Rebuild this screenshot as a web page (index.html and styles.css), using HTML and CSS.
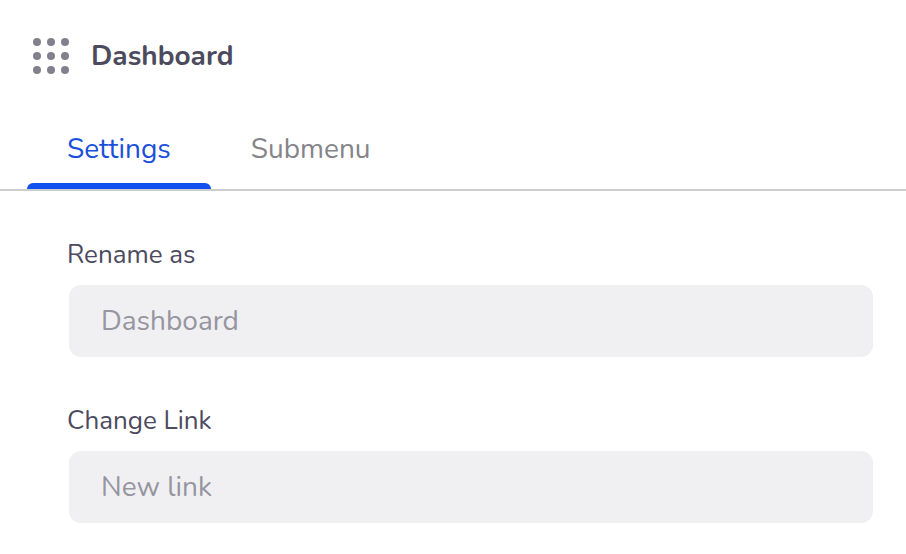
FILE: index.html
```html
<!DOCTYPE html>
<html lang="en">
<head>
<meta charset="utf-8">
<title>Dashboard settings</title>
<link rel="stylesheet" href="styles.css">
</head>
<body>
<header class="header">
  <svg class="handle" viewBox="0 0 36 36" aria-hidden="true">
    <circle cx="4" cy="4" r="4"/><circle cx="18" cy="4" r="4"/><circle cx="32" cy="4" r="4"/>
    <circle cx="4" cy="18" r="4"/><circle cx="18" cy="18" r="4"/><circle cx="32" cy="18" r="4"/>
    <circle cx="4" cy="32" r="4"/><circle cx="18" cy="32" r="4"/><circle cx="32" cy="32" r="4"/>
  </svg>
  <h1 class="title">Dashboard</h1>
</header>
<nav class="tabs">
  <button class="tab tab-active" type="button">Settings</button>
  <button class="tab" type="button">Submenu</button>
</nav>
<form class="form">
  <div class="field">
    <label class="label" for="rename">Rename as</label>
    <input class="input" id="rename" type="text" placeholder="Dashboard">
  </div>
  <div class="field">
    <label class="label" for="link">Change Link</label>
    <input class="input" id="link" type="text" placeholder="New link">
  </div>
</form>
</body>
</html>
```
FILE: styles.css
```css
* {
  box-sizing: border-box;
}

body {
  margin: 0;
  background: #fff;
  color: #4c4b5e;
  font-family: Nunito, "Noto Sans", sans-serif;
}

.header {
  display: flex;
  align-items: center;
  gap: 22px;
  padding: 36px 33px 34px;
}

.handle {
  width: 36px;
  height: 36px;
  fill: #82808c;
}

.title {
  margin: 0;
  font-size: 28px;
  font-weight: 700;
  line-height: 40px;
}

.tabs {
  display: flex;
  padding-left: 27px;
  border-bottom: 2px solid #cdcdd0;
}

.tab {
  padding: 19px 40px 20px;
  border: 0;
  background: none;
  color: #858489;
  font: inherit;
  font-size: 28px;
  line-height: 40px;
}

.tab-active {
  position: relative;
  color: #1a4fdc;
}

.tab-active::after {
  content: "";
  position: absolute;
  right: 0;
  bottom: 0;
  left: 0;
  height: 6px;
  border-radius: 6px 6px 0 0;
  background: #1350f0;
}

.form {
  display: grid;
  gap: 44px;
  padding: 44px 33px 30px 67px;
}

.field {
  display: grid;
  gap: 10px;
}

.label {
  font-size: 26px;
  line-height: 40px;
}

.input {
  width: calc(100% - 2px);
  height: 72px;
  margin-left: 2px;
  padding: 0 32px;
  border: 0;
  border-radius: 12px;
  background: #f0f0f2;
  color: #4c4b5e;
  font: inherit;
  font-size: 28px;
}

.input::placeholder {
  color: #9695a0;
  opacity: 1;
}
```
